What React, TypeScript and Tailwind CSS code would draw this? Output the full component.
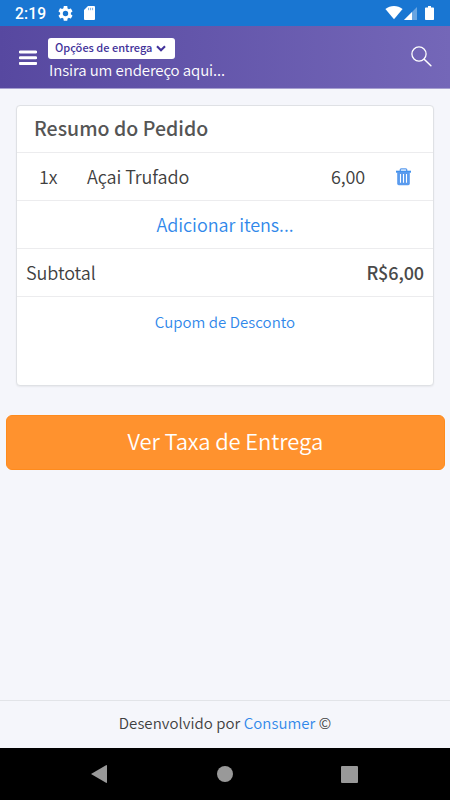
import React from "react";

function StatusBar() {
  return (
    <div className="flex h-[26px] shrink-0 items-center bg-[#1976d2] pl-[15px] text-white">
      <span className="w-[43px] pt-[2px] font-[Roboto] text-[15.6px] leading-[24px] font-medium tracking-[0.1px] whitespace-nowrap">2:19</span>
      <svg className="h-[15px] w-[15px]" viewBox="2 2 20 20" fill="currentColor">
        <path d="M19.14 12.94c.04-.3.06-.61.06-.94s-.02-.64-.07-.94l2.03-1.58a.49.49 0 0 0 .12-.61l-1.92-3.32a.49.49 0 0 0-.59-.22l-2.39.96a7 7 0 0 0-1.62-.94l-.36-2.54A.48.48 0 0 0 13.92 2h-3.84a.48.48 0 0 0-.47.41l-.36 2.54c-.59.24-1.13.57-1.62.94l-2.39-.96a.48.48 0 0 0-.59.22L2.74 8.87a.47.47 0 0 0 .12.61l2.03 1.58a7 7 0 0 0 0 1.88l-2.03 1.58a.49.49 0 0 0-.12.61l1.92 3.32c.12.22.37.29.59.22l2.39-.96c.5.38 1.03.7 1.62.94l.36 2.54c.05.24.24.41.48.41h3.84c.24 0 .44-.17.47-.41l.36-2.54a7 7 0 0 0 1.62-.94l2.39.96c.22.08.47 0 .59-.22l1.92-3.32a.47.47 0 0 0-.12-.61zM12 15.6a3.6 3.6 0 1 1 0-7.2 3.6 3.6 0 0 1 0 7.2z" />
      </svg>
      <svg className="ml-[11px] h-[14px] w-[11px]" viewBox="0 0 11 14">
        <path d="M4 0h6a1 1 0 0 1 1 1v12a1 1 0 0 1-1 1H1a1 1 0 0 1-1-1V4z" fill="currentColor" />
        <path d="M4.6 1.8v2.4M6.6 1.8v2.4M8.6 1.8v2.4" stroke="#1976d2" strokeWidth="0.8" opacity=".7" />
      </svg>
      <svg className="ml-auto h-[14px] w-[18px]" viewBox="0 0 18 14" fill="currentColor">
        <path d="M9 13.2 0.4 3C3 1 5.8 0 9 0s6 1 8.6 3z" />
      </svg>
      <svg className="ml-[1px] h-[13px] w-[14px]" viewBox="0 0 14 13" fill="currentColor">
        <path d="M0 13 13 0v13z" opacity=".35" />
        <path d="M0 13 8 5v8z" />
      </svg>
      <svg className="mr-[16px] ml-[7px] h-[14px] w-[9px]" viewBox="0 0 9 14" fill="currentColor">
        <path d="M3 0h3v1.5h2.2q.8 0 .8.8v10.9q0 .8-.8.8H.8q-.8 0-.8-.8V2.3q0-.8.8-.8H3z" />
      </svg>
    </div>
  );
}

function Header() {
  return (
    <header className="flex h-[63px] shrink-0 border-b border-[#a69fd0] bg-linear-to-r from-[#5748a0] to-[#7467b8] text-white">
      <svg className="mt-[24px] ml-[19px] h-[15px] w-[18px]" viewBox="0 0 18 15">
        <path d="M1.2 2h15.6M1.2 7.7h15.6M1.2 13.4h15.6" stroke="currentColor" strokeWidth="3" strokeLinecap="round" />
      </svg>
      <div className="ml-[11px] pt-[12px]">
        <button className="flex h-[21px] w-[127px] items-center rounded-[3px] bg-white pl-[7px] text-[#42329a]">
          <span className="w-[98px] pb-[3px] text-left text-[11px] leading-[17px] font-medium whitespace-nowrap">Opções de entrega</span>
          <svg className="ml-[3px] h-[7px] w-[10px]" viewBox="0 0 10 7">
            <path d="M1 1.2 5 5.2 9 1.2" fill="none" stroke="currentColor" strokeWidth="2.1" />
          </svg>
        </button>
        <div className="pl-px text-[15px] leading-[22px] font-[350] tracking-[-0.1px] whitespace-nowrap">Insira um endereço aqui...</div>
      </div>
      <svg className="mt-[20px] mr-[18px] ml-auto h-[21px] w-[21px]" viewBox="0 0 21 21">
        <circle cx="8" cy="8" r="7.1" fill="none" stroke="currentColor" strokeWidth="1.3" />
        <path d="m13.2 13.2 6.7 6.5" stroke="currentColor" strokeWidth="1.5" strokeLinecap="round" />
      </svg>
    </header>
  );
}

function TrashIcon() {
  return (
    <svg className="h-[18px] w-[15px]" viewBox="0 0 15 18">
      <path d="M4.3 3V1.7q0-.9.9-.9h4.6q.9 0 .9.9V3" fill="none" stroke="#5a9bee" strokeWidth="1.3" />
      <path d="M0 2.7h15v2H0z" fill="#4292ee" />
      <path d="M1.2 4h12.6v11.6q0 1.6-1.6 1.6H2.8q-1.6 0-1.6-1.6z" fill="#5a9bee" />
      <path d="M4.5 6v8.7M7.5 6v8.7M10.5 6v8.7" stroke="#fff" strokeWidth="1.1" />
    </svg>
  );
}

function Summary() {
  return (
    <section className="mx-[16px] mt-[16px] flex h-[281px] shrink-0 flex-col rounded-[4px] border border-[#dfe1e5] bg-white text-[18px] font-[350] tracking-[-0.1px] text-[#404040] shadow-[0_1px_2px_rgba(0,0,0,0.06)]">
      <h1 className="h-[47px] border-b border-[#ececee] pl-[17px] text-[19.5px] leading-[43px] font-medium tracking-[0.03px] whitespace-nowrap text-[#555]">Resumo do Pedido</h1>
      <div className="flex h-[48px] items-center border-b border-[#ececee] pr-[22px] pl-[22px] leading-[47px] whitespace-nowrap">
        <span className="w-[48px]">1x</span>
        <span className="flex-1">Açai Trufado</span>
        <span className="mr-[31px]">6,00</span>
        <TrashIcon />
      </div>
      <a className="h-[48px] border-b border-[#ececee] text-center leading-[47px] tracking-[-0.07px] text-[#3088ea]">Adicionar itens...</a>
      <div className="flex h-[48px] justify-between border-b border-[#ececee] px-[9px] leading-[47px]">
        <span>Subtotal</span>
        <span className="font-medium text-[#4a4a4a]">R$6,00</span>
      </div>
      <a className="mt-[14px] text-center text-[15px] leading-[22px] tracking-[0.04px] text-[#3088ea]">Cupom de Desconto</a>
    </section>
  );
}

function NavigationBar() {
  return (
    <nav className="flex h-[52px] shrink-0 items-center bg-black text-[#999]">
      <svg className="ml-[91px] h-[18px] w-[16px]" viewBox="0 0 16 18" fill="currentColor">
        <path d="M0 9 15 .2q1-.4 1 .5v16.6q0 .9-1 .5z" />
      </svg>
      <span className="ml-[110px] h-[16px] w-[16px] rounded-full bg-[#999]" />
      <span className="ml-[108px] h-[17px] w-[17px] rounded-[1px] bg-[#999]" />
    </nav>
  );
}

export default function App() {
  return (
    <div className="flex h-[800px] w-[450px] flex-col overflow-hidden bg-[#f5f6fb] font-['Noto_Sans_CJK_JP',sans-serif]">
      <StatusBar />
      <Header />
      <Summary />
      <button className="mt-[29px] mr-[5px] ml-[5.5px] h-[55px] shrink-0 rounded-[6px] border border-[#ff8b1c] bg-[#ff922e] pb-[4px] text-[22px] leading-[49px] font-[350] tracking-[-0.1px] text-white">Ver Taxa de Entrega</button>
      <footer className="mt-auto h-[48px] shrink-0 border-t border-[#e2e4e8] text-center text-[15px] leading-[43px] font-[350] tracking-[0.04px] text-[#404040]">
        Desenvolvido por <a className="text-[#3088ea]">Consumer</a> ©
      </footer>
      <NavigationBar />
    </div>
  );
}
